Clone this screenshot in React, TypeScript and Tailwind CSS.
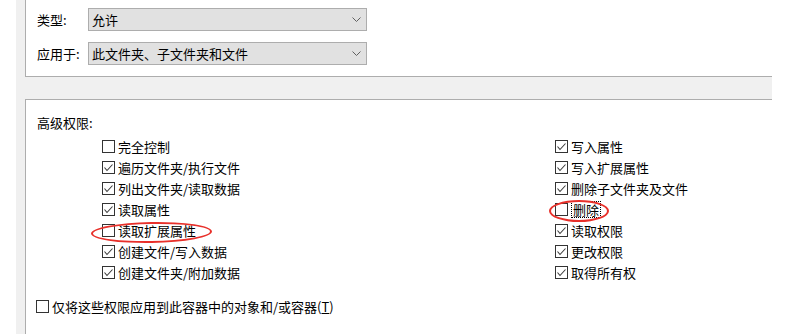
import type { ReactNode } from "react";

const leftPerms = [
  { label: "完全控制", checked: false },
  { label: "遍历文件夹/执行文件", checked: true },
  { label: "列出文件夹/读取数据", checked: true },
  { label: "读取属性", checked: true },
  { label: "读取扩展属性", checked: false },
  { label: "创建文件/写入数据", checked: true },
  { label: "创建文件夹/附加数据", checked: true },
];

const rightPerms = [
  { label: "写入属性", checked: true },
  { label: "写入扩展属性", checked: true },
  { label: "删除子文件夹及文件", checked: true },
  { label: "删除", checked: false, focused: true },
  { label: "读取权限", checked: true },
  { label: "更改权限", checked: true },
  { label: "取得所有权", checked: true },
];

function Box({ checked }: { checked: boolean }) {
  return (
    <span className="flex h-[13px] w-[13px] shrink-0 items-center justify-center border border-[#333333] bg-white">
      {checked && (
        <svg width="11" height="11" viewBox="0 0 11 11" fill="none">
          <polyline points="1.5,5.5 4,8.5 9.5,2.5" stroke="#3c3c3c" strokeWidth="1.1" />
        </svg>
      )}
    </span>
  );
}

function Check({ checked, children, focused }: { checked: boolean; children: ReactNode; focused?: boolean }) {
  return (
    <div className="flex h-[21px] items-center gap-[3px]">
      <Box checked={checked} />
      <span className={focused ? "border border-dotted border-black px-px leading-[15px]" : "leading-[15px]"}>
        {children}
      </span>
    </div>
  );
}

function Select({ value }: { value: string }) {
  return (
    <div className="flex h-[23px] w-[279px] items-center justify-between border border-[#adadad] bg-[#e1e1e1] pl-[3px] pr-[5px]">
      <span className="leading-none">{value}</span>
      <svg width="9" height="5" viewBox="0 0 9 5" fill="none">
        <polyline points="0.5,0.5 4.5,4.5 8.5,0.5" stroke="#606060" strokeWidth="1" />
      </svg>
    </div>
  );
}

export default function App() {
  return (
    <div
      className="relative h-[334px] w-[809px] overflow-hidden bg-white text-[13px] text-black"
      style={{ fontFamily: '"Noto Sans CJK SC", "Liberation Sans", sans-serif' }}
    >
      <div className="ml-[16px] flex h-full w-[756px] flex-col bg-[#f0f0f0] pl-[9px]">
        {/* Top panel */}
        <div className="h-[77px] border-b border-l border-[#adadad] bg-white pl-[11px] pt-[8px]">
          <div className="grid grid-cols-[51px_auto] items-center gap-y-[11px]">
            <span>类型:</span>
            <Select value="允许" />
            <span>应用于:</span>
            <Select value="此文件夹、子文件夹和文件" />
          </div>
        </div>

        <div className="h-[22px]" />

        {/* Advanced permissions */}
        <div className="flex-1 border-l border-t border-[#adadad] bg-white pl-[11px] pt-[15px]">
          <div className="leading-[16px]">高级权限:</div>
          <div className="mt-[5px] flex pl-[65px]">
            <div className="w-[453px]">
              {leftPerms.map((p) => (
                <Check key={p.label} checked={p.checked}>
                  {p.label}
                </Check>
              ))}
            </div>
            <div>
              {rightPerms.map((p) => (
                <Check key={p.label} checked={p.checked} focused={p.focused}>
                  {p.label}
                </Check>
              ))}
            </div>
          </div>
          <div className="mt-[13px] -ml-px flex h-[21px] items-center gap-[3px]">
            <Box checked={false} />
            <span>
              仅将这些权限应用到此容器中的对象和/或容器(<span className="underline">T</span>)
            </span>
          </div>
        </div>
      </div>

      {/* Red annotation ellipses */}
      <div className="absolute left-[91px] top-[222px] h-[21px] w-[121px] -rotate-1 rounded-[50%] border-2 border-[#e8302a]" />
      <div className="absolute left-[549px] top-[200px] h-[22px] w-[60px] rounded-[50%] border-2 border-[#e8302a]" />
    </div>
  );
}
